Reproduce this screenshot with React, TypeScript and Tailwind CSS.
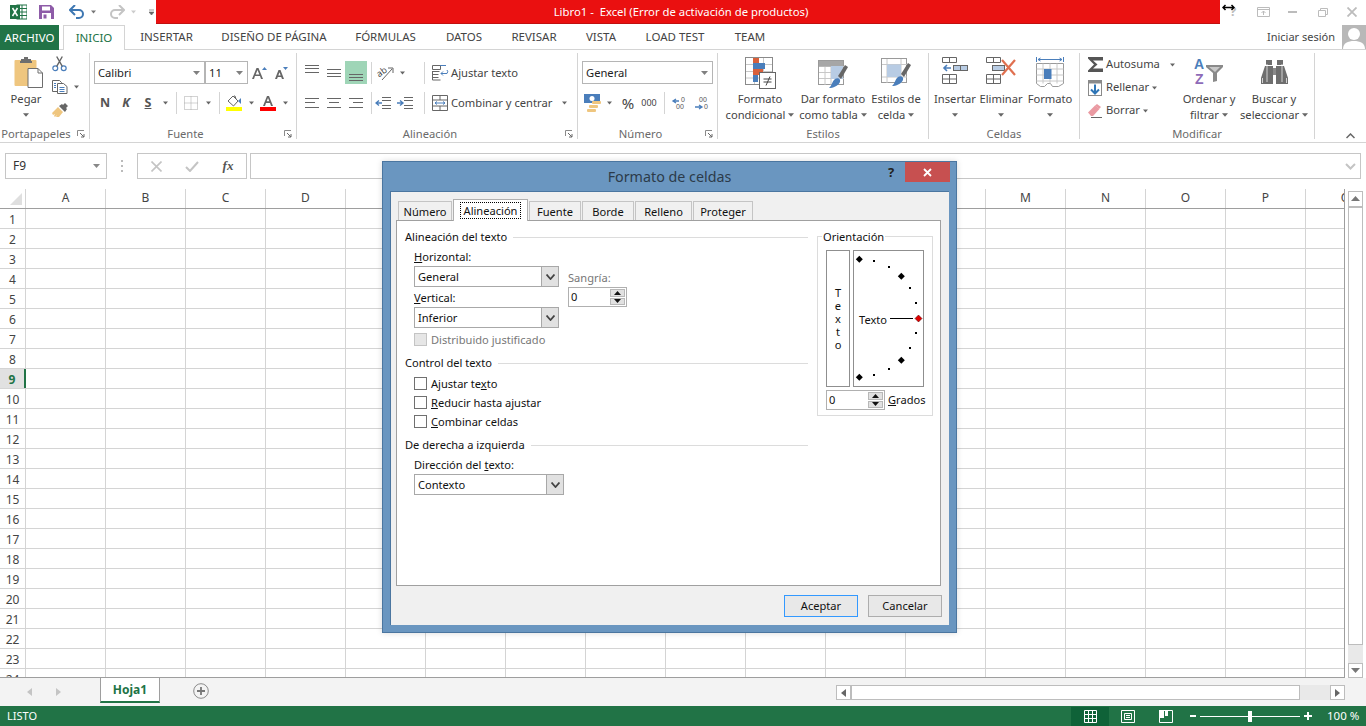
import React from "react";

const FONT = "font-['Noto_Sans','Open_Sans',sans-serif]";

const cols = ["A","B","C","D","E","F","G","H","I","J","K","L","M","N","O","P","Q"];
const rows = Array.from({length:24},(_,i)=>i+1);

function Caret({c="#666",w=7}:{c?:string;w?:number}){
  return <svg width={w} height={4} viewBox="0 0 7 4" className="shrink-0"><path d="M0 0h7L3.5 4z" fill={c}/></svg>;
}
function Sep(){return <div className="w-px h-[22px] bg-[#d4d4d4] shrink-0"/>;}
function Launcher(){
  return <svg width="8" height="8" viewBox="0 0 8 8" className="shrink-0"><path d="M.5 6V.5H7" fill="none" stroke="#8a8a8a"/><path d="M3 3l4 4M7 4v3H4" fill="none" stroke="#666"/></svg>;
}
function Cell({w,children,className=""}:{w:number;children?:React.ReactNode;className?:string}){
  return <div style={{width:w}} className={"shrink-0 flex items-center justify-center [&>svg]:shrink-0 "+className}>{children}</div>;
}
function Group({w,label,launcher,labelPr=0,children}:{w:number;label:string;launcher?:boolean;labelPr?:number;children:React.ReactNode}){
  return (
    <div style={{width:w}} className="shrink-0 h-[86px] mt-[3px] border-r border-[#d4d4d4] flex flex-col">
      <div className="h-[71px] flex">{children}</div>
      <div className="h-[15px] pt-[4px] flex relative">
        <div style={{paddingRight:labelPr}} className="flex-1 text-center text-[11.2px] text-[#6a6a6a] leading-[11px]">{label}</div>
        {launcher && <div className="absolute right-[4px] top-[6px]"><Launcher/></div>}
      </div>
    </div>
  );
}

/* icons */
function Paste(){return(
<svg width="30" height="32" viewBox="0 0 30 32" className="ml-[6px]">
  <rect x="0.5" y="3" width="22" height="26" rx="1" fill="#efc67f"/>
  <path d="M7 4V2h3V0h4v2h3v2h1v2H6V4z" fill="#6e6e6e"/>
  <path d="M14 11.5h10l4.5 4.5v14.5H14z" fill="#fff" stroke="#6e6e6e"/>
  <path d="M24 11.5v4.5h4.5" fill="none" stroke="#6e6e6e"/>
</svg>);}
function Scissors(){return(
<svg width="15" height="16" viewBox="0 0 16 16" fill="none">
  <circle cx="3.5" cy="12.5" r="2.6" stroke="#4a7ebb" strokeWidth="1.3"/>
  <circle cx="12.5" cy="12.5" r="2.6" stroke="#4a7ebb" strokeWidth="1.3"/>
  <path d="M5 10.5 11 0M11 10.5 5 0" stroke="#666" strokeWidth="1.5"/>
</svg>);}
function Copy(){return(
<svg width="16" height="14" viewBox="0 0 16 14" fill="#fff">
  <path d="M.5.5h7l2 2v9H.5z" stroke="#666"/>
  <path d="M5.5 3.5h6l3.5 3v7H5.5z" stroke="#666"/>
  <path d="M7.5 7.5h5M7.5 9.5h5M7.5 11.5h5M2 3.5h2M2 5.5h2M2 7.5h2" stroke="#4a7ebb"/>
</svg>);}
function Brush(){return(
<svg width="16" height="14" viewBox="0 0 16 14">
  <path d="M0 10l6-6 5 5-4 5H4l1-2-2 2-1-1 1-2-2 1z" fill="#efc67f"/>
  <path d="M7 3l3-2 1 1 2-2 3 3-2 2 1 1-2 3z" fill="#666"/>
</svg>);}
function Lines({ls}:{ls:[number,number,number][]}){return(
<svg width="15" height="20" viewBox="0 0 15 20">{ls.map(([y,a,b],i)=><rect key={i} x={a} y={y} width={b-a} height={1} fill="#666"/>)}</svg>);}
function ColorA({c}:{c:string}){return(
<svg width="16" height="16" viewBox="0 0 16 16">
  <path d="M3 11 7 1h2l4 10h-2L10 8H6l-1 3zM6.7 6.3h2.6L8 3z" fill="#666" fillRule="evenodd"/>
  <rect x="0" y="12" width="16" height="4" fill={c}/>
</svg>);}
function Fill(){return(
<svg width="16" height="16" viewBox="0 0 16 16">
  <path d="M2 6 7 1l5 5-4.5 5z" fill="#fff" stroke="#666"/>
  <path d="M8 1h1l1 3" fill="none" stroke="#666"/>
  <path d="M12 6l3 3V3z" fill="#4a7ebb"/>
  <rect x="0" y="12" width="16" height="4" fill="#ffff00"/>
</svg>);}
function BigA({up}:{up:boolean}){return(
<svg width="16" height="14" viewBox="0 0 16 14">
  <path d={up?"M0 13 4.5 2h2L11 13H9L8 10H3l-1 3zM3.7 8.5h3.6L5.5 4z":"M2 13 5.5 4h2L11 13H9L8.2 11H4.8L4 13zM5.3 9.5h2.4L6.5 6.2z"} fill="#666" fillRule="evenodd"/>
  <path d={up?"M10 4l2.5-3L15 4z":"M10 1h5l-2.5 3z"} fill="#4a7ebb"/>
</svg>);}
function Borders(){return(
<svg width="14" height="14" viewBox="0 0 14 14" fill="none" stroke="#a6a6a6" strokeDasharray="1 1">
  <path d="M.5.5h13v13H.5zM7 .5v13M.5 7h13"/>
</svg>);}
function Orient(){return(
<svg width="18" height="16" viewBox="0 0 18 16">
  <text x="1" y="10" fontSize="9" fill="#444" transform="rotate(-35 6 8)" fontFamily="Noto Sans">ab</text>
  <path d="M6 15 16 4M12 3h5v5" fill="none" stroke="#666"/>
</svg>);}
function Indent({right}:{right:boolean}){return(
<svg width="16" height="12" viewBox="0 0 16 12">
  <path d="M7 .5h9M7 3.5h9M7 8.5h9M7 11.5h9" stroke="#666" fill="none"/>
  {right?<path d="M0 6h5M3 3.5 6 6l-3 2.5" stroke="#4a7ebb" strokeWidth="1.4" fill="none"/>:<path d="M1 6h6M4 3.5 1 6l3 2.5" stroke="#4a7ebb" strokeWidth="1.4" fill="none"/>}
</svg>);}
function Wrap(){return(
<svg width="17" height="16" viewBox="0 0 17 16" fill="none">
  <path d="M.5.5h8v4h-8zM.5 6.5h7M.5 9.5h6M.5 12.5h6M.5 6v9h8" stroke="#666"/>
  <path d="M8 .5h6" stroke="#4a7ebb"/>
  <path d="M9 8.5h6q1.5-2 0-3.5M9 8.5l2-2M9 8.5l2 2" stroke="#4a7ebb"/>
</svg>);}
function Merge(){return(
<svg width="16" height="16" viewBox="0 0 16 16" fill="none">
  <path d="M.5.5h15v15H.5zM.5 5h15M.5 11h15M8 .5V5M8 11v4.5" stroke="#666"/>
  <path d="M3 8h10M3 8l2-1.5M3 8l2 1.5M13 8l-2-1.5M13 8l-2 1.5" stroke="#4a7ebb"/>
</svg>);}
function Currency(){return(
<svg width="18" height="18" viewBox="0 0 18 18">
  <rect x="0" y="0" width="16" height="9" fill="#4a7ebb"/>
  <circle cx="8" cy="4.5" r="2.5" fill="#fff"/>
  <rect x="8" y="7" width="9" height="3" rx="1" fill="#efc67f"/><rect x="5" y="11" width="9" height="3" rx="1" fill="#efc67f"/><rect x="3" y="15" width="9" height="3" rx="1" fill="#efc67f"/>
</svg>);}
function Dec({more}:{more:boolean}){return(
<svg width="18" height="14" viewBox="0 0 18 14">
  <path d={more?"M2 5h6M5 3l-3 2 3 2":"M1 11h7M5 9l3 2-3 2"} stroke="#4a7ebb" strokeWidth="1.3" fill="none"/>
  {more?<>
    <text x="10" y="6" fontSize="7" fill="#555" fontFamily="Liberation Sans">0</text>
    <text x="5" y="13" fontSize="7" fill="#555" fontFamily="Liberation Sans">00</text></>:<>
    <text x="5" y="6" fontSize="7" fill="#555" fontFamily="Liberation Sans">00</text>
    <text x="10" y="13" fontSize="7" fill="#555" fontFamily="Liberation Sans">0</text></>}
</svg>);}
function CondFormat(){return(
<svg width="31" height="32" viewBox="0 0 31 32">
  <rect x="0.5" y="0.5" width="27" height="27" fill="#fff" stroke="#8a8a8a"/>
  <path d="M9.5 1v26M18.5 1v26M1 7.5h26M1 14.5h26M1 21h26" stroke="#c8c8c8"/>
  <path d="M8 1h6v5H8z" fill="#d9603b"/><path d="M8 6h12v6H8z" fill="#4a7ebb"/>
  <path d="M8 12h10v6H8z" fill="#d9603b"/><path d="M8 18h5v7H8z" fill="#4a7ebb"/>
  <rect x="14.5" y="15.5" width="16" height="16" fill="#fff" stroke="#666"/>
  <path d="M18.5 22h8M18.5 25h8M25 19.5l-4 9" stroke="#444"/>
</svg>);}
function TableFmt(){return(
<svg width="31" height="32" viewBox="0 0 31 32">
  <rect x="0.5" y="3.5" width="25" height="24" fill="#fff" stroke="#9a9a9a"/>
  <path d="M7 4v24M13 4v24M19 4v24M1 9.5h25M1 15.5h25M1 21.5h25" stroke="#c8c8c8"/>
  <rect x="1" y="4" width="24" height="5.5" fill="#a6a6a6"/>
  <rect x="13" y="9" width="12" height="13" fill="#b8cce4"/>
  <path d="M20 19 27 8l3 2-7 12z" fill="#666"/>
  <path d="M17 22c3-2 6 0 5 3-2 4-7 6-11 6 3-2 3-7 6-9z" fill="#4a7ebb"/>
</svg>);}
function CellStyle(){return(
<svg width="31" height="32" viewBox="0 0 31 32">
  <rect x="0.5" y="1.5" width="25" height="24" fill="#fff" stroke="#9a9a9a"/>
  <path d="M6 2v24M1 7.5h25M20 2v24M1 20h25" stroke="#c8c8c8"/>
  <rect x="6" y="7.5" width="14" height="12.5" fill="#b8cce4"/>
  <path d="M20 17 27 6l3 2-7 12z" fill="#666"/>
  <path d="M17 20c3-2 6 0 5 3-2 4-7 6-11 6 3-2 3-7 6-9z" fill="#4a7ebb"/>
</svg>);}
function InsertI(){return(
<svg width="27" height="27" viewBox="0 0 27 27" fill="none">
  <path d="M.5.5h14v5H.5zM7.5.5v5M.5 17.5h14v9H.5zM.5 22h14M7.5 17.5v9" stroke="#666"/>
  <rect x="11.5" y="8.5" width="14" height="5" fill="#b8cce4" stroke="#666"/><path d="M18.5 8.5v5" stroke="#666"/>
  <path d="M9 11H2M5 8l-3 3 3 3" stroke="#4a7ebb" strokeWidth="1.6"/>
</svg>);}
function DeleteI(){return(
<svg width="30" height="27" viewBox="0 0 30 27" fill="none">
  <path d="M.5.5h14v5H.5zM7.5.5v5M.5 17.5h14v9H.5zM.5 22h14M7.5 17.5v9" stroke="#666"/>
  <rect x="6.5" y="8.5" width="12" height="5" fill="#b8cce4" stroke="#666"/>
  <path d="M16 3l13 15M29 3 16 18" stroke="#e07050" strokeWidth="2.2"/>
</svg>);}
function FormatI(){return(
<svg width="28" height="30" viewBox="0 0 28 30" fill="none">
  <path d="M.5 0v5M27.5 0v5M2 2.5h24M2 2.5l2.5-1.5M2 2.5 4.5 4M26 2.5 23.5 1M26 2.5 23.5 4" stroke="#4a7ebb"/>
  <path d="M.5 6.5h27v20l-5 3h-6l-2-3h-3l-3 3h-4l-4-3z" stroke="#9a9a9a"/>
  <path d="M7 6.5v20M14 6.5v20M21 6.5v20M.5 12h27M.5 18h27M.5 24h27" stroke="#c8c8c8"/>
  <rect x="8" y="12" width="7.5" height="10" fill="#4a7ebb"/>
</svg>);}
function Sigma(){return(
<svg width="16" height="15" viewBox="0 0 16 15"><path d="M0 0h15v3.500H5L9.500 7.500 5 11.500h10V15H0v-1.500L6 7.500 0 1.500z" fill="#555"/></svg>);}
function FillI(){return(
<svg width="14" height="16" viewBox="0 0 14 16" fill="none">
  <rect x=".5" y=".5" width="13" height="15" fill="#fff" stroke="#8a8a8a"/><rect x="1" y="1" width="12" height="2.5" fill="#8a8a8a"/>
  <path d="M7 4.5v9M3 9.5l4 4 4-4" stroke="#2e75b6" strokeWidth="2"/>
</svg>);}
function Eraser(){return(
<svg width="14" height="14" viewBox="0 0 14 14">
  <path d="M0 8.5 7 1.5l4.5 3.500-6.500 7H3z" fill="#ea9aa2"/><path d="M7 1.5l2-1.500 4 3-2 2z" fill="#ea9aa2"/><path d="M3 13.500h11" stroke="#666"/>
</svg>);}
function SortI(){return(
<svg width="31" height="28" viewBox="0 0 31 28">
  <text x="0" y="12" fontSize="14" fontWeight="700" fill="#4a7ebb" fontFamily="Liberation Sans">A</text>
  <text x="1" y="27" fontSize="14" fontWeight="700" fill="#8e6bb8" fontFamily="Liberation Sans">Z</text>
  <path d="M12 8h17v2l-6 6v8l-4 1v-9l-7-6z" fill="#8a8a8a"/><path d="M15 10h11l-5 5z" fill="#c8c8c8"/>
</svg>);}
function Binoc(){return(
<svg width="27" height="24" viewBox="0 0 27 24" className="mt-[3px]">
  <rect x="5" y="0" width="6" height="5" fill="#6e6e6e"/><rect x="16" y="0" width="6" height="5" fill="#6e6e6e"/>
  <path d="M4 6h8v18H0v-6z" fill="#6e6e6e"/><path d="M23 6h-8v18h12v-6z" fill="#6e6e6e"/>
  <rect x="12" y="8" width="3" height="7" fill="#8a8a8a"/>
  <path d="M1.500 23v-5M25.500 23v-5M6 4v18M21 4v18" stroke="#fff" strokeWidth=".7"/>
</svg>);}

function BigBtn({w,icon,l1,l2,caretInline}:{w:number;icon:React.ReactNode;l1:string;l2?:string;caretInline?:boolean}){
  return (
    <div style={{width:w}} className="shrink-0 flex flex-col items-center text-[#444] text-[11.2px] leading-[16px] whitespace-nowrap">
      <div className="h-[35px] mt-[4px] flex items-start justify-center">{icon}</div>
      <div className="h-[16px] mt-[-1px]">{l1}</div>
      {caretInline
        ? <div className="h-[16px] flex items-center gap-[3px]">{l2}<Caret w={6}/></div>
        : <div className="h-[16px] flex items-center"><Caret w={6}/></div>}
    </div>
  );
}

function Combo({w,text}:{w:number;text:string}){
  return (
    <div style={{width:w}} className="h-[23px] border border-[#b5b5b5] bg-white flex items-center pl-[3px] pr-[4px] justify-between text-[11.2px] text-[#222] shrink-0">
      <span className="pt-px">{text}</span><Caret c="#808080"/>
    </div>
  );
}

function DlgSelect({w,text}:{w:number;text:string}){
  return (
    <div style={{width:w}} className="h-[21px] border border-[#a8a8a8] bg-white flex items-center justify-between pl-[3px] text-[11.1px] text-[#111]">
      <span>{text}</span>
      <div className="w-[17px] h-full bg-[#e1e1e1] border-l border-[#a8a8a8] flex items-center justify-center">
        <svg width="9" height="6" viewBox="0 0 9 6"><path d="M.5.5 4.500 5 8.500.5" fill="none" stroke="#444" strokeWidth="1.800"/></svg>
      </div>
    </div>
  );
}
function Spin({w}:{w:number}){
  return (
    <div style={{width:w}} className="h-[20px] border border-[#b0b0b0] bg-white flex items-center justify-between pl-[2px] pr-px text-[11.1px] text-[#111]">
      <span>0</span>
      <div className="w-[15px] h-[16px] flex flex-col gap-px">
        <div className="flex-1 bg-[#e1e1e1] border border-[#b8b8b8] flex items-center justify-center"><svg width="7" height="4"><path d="M0 4 3.500 0 7 4z" fill="#111"/></svg></div>
        <div className="flex-1 bg-[#e1e1e1] border border-[#b8b8b8] flex items-center justify-center"><svg width="7" height="4"><path d="M0 0 3.500 4 7 0z" fill="#111"/></svg></div>
      </div>
    </div>
  );
}
function Section({label,mt=0}:{label:string;mt?:number}){
  return <div style={{marginTop:mt}} className="h-[14px] flex items-center gap-[6px] text-[11.1px] text-[#111] leading-none whitespace-nowrap">{label}<div className="flex-1 h-px bg-[#dcdcdc]"/></div>;
}
function Check({children,mt}:{children:React.ReactNode;mt:number}){
  return <div style={{marginTop:mt}} className="ml-[9px] h-[13px] flex items-center gap-[4px] text-[11.1px] text-[#111] leading-none">
    <div className="w-[13px] h-[13px] border border-[#707070] bg-white shrink-0"/><span>{children}</span></div>;
}
function DlgTab({w,active,children}:{w:number;active?:boolean;children:string}){
  return active
   ? <div style={{width:w}} className="h-[22px] mb-[-1px] z-10 relative bg-white border border-b-0 border-[#b0b0b0] flex items-center justify-center text-[11.1px] leading-[14px] text-[#111]">
       <span className="border border-dotted border-black px-[3px] leading-[15px]">{children}</span>
     </div>
   : <div style={{width:w}} className="h-[19px] pt-[2px] bg-[#f0f0f0] border border-b-0 border-[#c4c4c4] flex items-center justify-center text-[11.1px] leading-[14px] text-[#111]">{children}</div>;
}

const dots:[number,number,boolean][]=[[6.3,9.3,true],[21,11,false],[36,17,false],[48.3,26.3,true],[57,38,false],[63,53,false],[63,83,false],[57,98,false],[48.3,110.3,true],[36,119,false],[21,125,false],[6.3,127.3,true]];

function Dial(){
  return (
    <div className="w-[71px] h-[137px] border border-[#8f8f8f] ml-[3px] relative">
      <svg width="71" height="137" viewBox="0 0 71 137" className="absolute -left-px -top-px">
        {dots.map(([x,y,b],i)=> b
          ? <path key={i} d={`M${x} ${y-3.5}l3.5 3.5-3.5 3.5-3.5-3.5z`} fill="#000"/>
          : <rect key={i} x={x-1} y={y-1} width={2} height={2} fill="#000"/>)}
        <path d="M37 68.5h23" stroke="#000"/>
        <path d="M65.5 65l3.5 3.5-3.5 3.5-3.5-3.5z" fill="#e00000" stroke="#400" strokeWidth=".5"/>
      </svg>
      <span className="absolute left-[5px] top-[62px] text-[11.1px] leading-[14px] text-[#111]">Texto</span>
    </div>
  );
}

function Dialog(){
  return (
    <div className={"absolute left-[382px] top-[161px] w-[575px] h-[472px] bg-[#6a96c0] border border-[#4b76a0] shadow-[0_0_6px_rgba(0,0,0,0.15)] flex flex-col "+FONT}>
      <div className="h-[29px] shrink-0 flex relative">
        <div className="flex-1 text-center text-[14.3px] leading-[30px] text-[#2c3b4a]">Formato de celdas</div>
        <div className="absolute right-[50px] top-0 w-[30px] text-center text-[13px] font-bold text-[#222] leading-[20px]">?</div>
        <div className="absolute right-[6px] top-0 w-[45px] h-[20px] bg-[#c75050] flex items-center justify-center">
          <svg width="9" height="9" viewBox="0 0 9 9"><path d="M1 1l7 7M8 1 1 8" stroke="#fff" strokeWidth="1.800"/></svg>
        </div>
      </div>
      <div className="mx-[7px] h-[434px] bg-[#f0f0f0] border border-[#4b76a0] border-r-0 border-b-0 pl-[5px] pt-[7px] flex flex-col">
        <div className="flex items-end h-[21px] pl-[2px] gap-px">
          <DlgTab w={54}>Número</DlgTab>
          <DlgTab w={75} active>Alineación</DlgTab>
          <DlgTab w={52}>Fuente</DlgTab>
          <DlgTab w={52}>Borde</DlgTab>
          <DlgTab w={57}>Relleno</DlgTab>
          <DlgTab w={60}>Proteger</DlgTab>
        </div>
        <div className="w-[545px] h-[366px] bg-white border border-[#a0a0a0] flex pl-[8px]">
          <div className="w-[403px] pt-[9px] flex flex-col text-[11.1px] text-[#111] leading-[14px]">
            <Section label="Alineación del texto"/>
            <div className="ml-[9px] mt-[6px] h-[14px]"><span className="underline">H</span>orizontal:</div>
            <div className="ml-[9px] mt-[2px] flex">
              <DlgSelect w={145} text="General"/>
              <div className="ml-[9px] flex flex-col">
                <div className="h-[14px] mt-[5px] text-[#777]">Sangría:</div>
                <div className="mt-[2px]"><Spin w={59}/></div>
              </div>
            </div>
            <div className="ml-[9px] -mt-[16px] h-[14px]"><span className="underline">V</span>ertical:</div>
            <div className="ml-[9px] mt-[2px]"><DlgSelect w={145} text="Inferior"/></div>
            <div className="ml-[9px] mt-[5px] h-[13px] flex items-center gap-[4px] text-[#777]">
              <div className="w-[13px] h-[13px] border border-[#c4c4c4] bg-[#e6e6e6]"/>Distribuido justificado
            </div>
            <Section label="Control del texto" mt={10}/>
            <Check mt={7}>Ajustar te<span className="underline">x</span>to</Check>
            <Check mt={6}><span className="underline">R</span>educir hasta ajustar</Check>
            <Check mt={6}><span className="underline">C</span>ombinar celdas</Check>
            <Section label="De derecha a izquierda" mt={10}/>
            <div className="ml-[9px] mt-[6px] h-[14px]">Dirección del <span className="underline">t</span>exto:</div>
            <div className="ml-[9px] mt-[2px]"><DlgSelect w={150} text="Contexto"/></div>
          </div>
          <div className="ml-[9px] mt-[15px] w-[116px] h-[180px] border border-[#dcdcdc] relative pl-[8px] pt-[13px]">
            <span className="absolute left-[4px] -top-[7px] bg-white px-px text-[11.1px] leading-[14px] text-[#111]">Orientación</span>
            <div className="flex">
              <div className="w-[24px] h-[137px] border border-[#8f8f8f] flex flex-col items-center justify-center text-[11.1px] leading-[13px] text-[#111]">
                {"Texto".split("").map((c,i)=><span key={i}>{c}</span>)}
              </div>
              <Dial/>
            </div>
            <div className="mt-[3px] flex items-center">
              <Spin w={59}/>
              <span className="ml-[3px] text-[11.1px] text-[#111]"><span className="underline">G</span>rados</span>
            </div>
          </div>
        </div>
        <div className="flex justify-end gap-[10px] mt-[9px] w-[546px]">
          <div className="w-[74px] h-[22px] border border-[#3399ff] bg-[#e8e8e8] flex items-center justify-center text-[11.1px] text-[#111]">Aceptar</div>
          <div className="w-[74px] h-[22px] border border-[#adadad] bg-[#e8e8e8] flex items-center justify-center text-[11.1px] text-[#111]">Cancelar</div>
        </div>
      </div>
    </div>
  );
}

export default function App(){
  return (
    <div className={"relative w-[1366px] h-[726px] overflow-hidden bg-white flex flex-col "+FONT}>
      {/* title bar */}
      <div className="h-[25px] shrink-0 flex items-start">
        <div className="w-[156px] h-[24px] flex items-center shrink-0">
          <div className="w-[39px] pl-[10px] flex">
            <svg width="17" height="16" viewBox="0 0 17 16"><rect x="7" y="1" width="10" height="14" fill="#fff" stroke="#217346"/><path d="M7 4.5h10M7 8h10M7 11.5h10M12 1v14" stroke="#217346"/><rect x="0" y="1" width="10" height="14" fill="#217346"/><path d="M2.5 4l5 8M7.5 4l-5 8" stroke="#fff" strokeWidth="1.5"/></svg>
          </div>
          <div className="w-[30px] flex justify-start">
            <svg width="15" height="14" viewBox="0 0 15 14"><path d="M0 0h12l3 3v11H0z" fill="#8e5ca8"/><rect x="3" y="1.5" width="8" height="4" fill="#fff"/><rect x="3" y="8" width="9" height="6" fill="#fff"/><rect x="4.5" y="9.5" width="3" height="4" fill="#8e5ca8"/></svg>
          </div>
          <div className="w-[40px] flex items-center gap-[6px]">
            <svg width="16" height="14" viewBox="0 0 16 14" fill="none"><path d="M2 5h8a4 4 0 0 1 0 8H7" stroke="#3e77b2" strokeWidth="2"/><path d="M6 0 1 5l5 5" stroke="#3e77b2" strokeWidth="2"/></svg>
            <Caret c="#777" w={5}/>
          </div>
          <div className="w-[40px] flex items-center gap-[6px]">
            <svg width="16" height="14" viewBox="0 0 16 14" fill="none"><path d="M14 5H6a4 4 0 0 0 0 8h3" stroke="#c4c4c4" strokeWidth="2"/><path d="M10 0l5 5-5 5" stroke="#c4c4c4" strokeWidth="2"/></svg>
            <Caret c="#ccc" w={5}/>
          </div>
          <svg width="5" height="7" viewBox="0 0 6 7" className="shrink-0"><path d="M0 .5h6M0 3h6L3 6.5z" stroke="#666" strokeWidth=".8" fill="#666"/></svg>
        </div>
        <div className="w-[1064px] shrink-0 h-[24px] bg-[#ea1010] border-b border-[#c01010] flex items-center justify-center pr-[14px] text-white text-[11.3px] leading-none whitespace-pre">Libro1 -  Excel (Error de activación de productos)</div>
        <div className="flex-1 h-[24px] flex items-center relative">
          <svg width="13" height="7" viewBox="0 0 13 7" className="absolute left-[2px] top-[4px]"><path d="M1 3.5h11M3.5 1 1 3.5 3.5 6M9.5 1 12 3.5 9.5 6" stroke="#000" strokeWidth="1.5" fill="none"/></svg>
          <div className="w-[6px] shrink-0"/>
          <span className="w-[14px] shrink-0 text-[#bcbcbc] font-bold text-[13px] text-center">?</span>
          <div className="w-[17px] shrink-0"/>
          <svg width="13" height="10" viewBox="0 0 13 10" fill="none" className="shrink-0"><path d="M.5.5h12v9H.5zM.5 2.5h12" stroke="#bcbcbc"/><path d="M6.500 8V4M4.500 6l2-2 2 2" stroke="#bcbcbc"/></svg>
          <div className="w-[18px] shrink-0"/>
          <div className="w-[9px] h-[2px] shrink-0 bg-[#bcbcbc]"/>
          <div className="w-[21px] shrink-0"/>
          <svg width="10" height="9" viewBox="0 0 10 9" fill="none" className="shrink-0"><path d="M.5 2.5h7v6h-7zM2.5 2V.5h7v6H8" stroke="#bcbcbc"/></svg>
          <div className="w-[19px] shrink-0"/>
          <svg width="10" height="10" viewBox="0 0 10 10" className="shrink-0"><path d="M.5.5l9 9M9.5.5l-9 9" stroke="#bcbcbc" strokeWidth="1.8"/></svg>
        </div>
      </div>
      {/* tabs */}
      <div className="h-[25px] shrink-0 flex border-b border-[#d4d4d4] text-[11.5px] text-[#444] relative">
        <div className="w-[59px] h-[25px] bg-[#217346] text-white flex items-center justify-center">ARCHIVO</div>
        <div className="ml-[4px] w-[62px] h-[25px] bg-white border border-b-0 border-[#d4d4d4] text-[#217346] flex items-center justify-center">INICIO</div>
        <div className="w-[83px] flex items-center justify-center">INSERTAR</div>
        <div className="w-[132px] flex items-center justify-center">DISEÑO DE PÁGINA</div>
        <div className="w-[91px] flex items-center justify-center">FÓRMULAS</div>
        <div className="w-[66px] flex items-center justify-center">DATOS</div>
        <div className="w-[74px] flex items-center justify-center">REVISAR</div>
        <div className="w-[60px] flex items-center justify-center">VISTA</div>
        <div className="w-[88px] flex items-center justify-center">LOAD TEST</div>
        <div className="w-[62px] flex items-center justify-center">TEAM</div>
        <div className="flex-1 flex items-center justify-end">
          <span className="text-[11px] mr-[7px]">Iniciar sesión</span>
          <div className="w-[24px] h-[24px] bg-[#b8b8b8] overflow-hidden">
            <svg width="24" height="24" viewBox="0 0 24 24"><circle cx="12" cy="9" r="6" fill="#fff"/><path d="M1 24c0-6 5-8 11-8s11 2 11 8z" fill="#fff"/></svg>
          </div>
        </div>
      </div>
      {/* ribbon */}
      <div className="h-[93px] shrink-0 border-b border-[#d4d4d4] flex">
        <Group w={90} label="Portapapeles" launcher labelPr={17}>
          <div className="w-[52px] shrink-0 flex flex-col items-center text-[11.2px] text-[#444] leading-[16px]">
            <div className="h-[35px] mt-[4px]"><Paste/></div>
            <div className="h-[16px] -mt-px">Pegar</div>
            <div className="h-[16px] flex items-center"><Caret w={6}/></div>
          </div>
          <div className="flex flex-col">
            <div className="h-[22px] flex items-center"><Scissors/></div>
            <div className="h-[22px] mt-px flex items-center gap-[6px]"><Copy/><Caret w={5}/></div>
            <div className="h-[22px] mt-px flex items-center"><Brush/></div>
          </div>
        </Group>
        <Group w={207} label="Fuente" launcher labelPr={15}>
          <div className="pl-[4px] pt-[8px] flex flex-col">
            <div className="flex items-center">
              <Combo w={111} text="Calibri"/>
              <Combo w={43} text="11"/>
              <Cell w={24}><BigA up/></Cell>
              <Cell w={18}><BigA up={false}/></Cell>
            </div>
            <div className="flex items-center h-[22px] mt-[8px] text-[#555] text-[12.5px]">
              <Cell w={22}><b>N</b></Cell>
              <Cell w={20}><b><i>K</i></b></Cell>
              <Cell w={24}><b className="underline">S</b></Cell>
              <Cell w={10}><Caret w={5}/></Cell>
              <Cell w={6}/><Sep/>
              <Cell w={28}><Borders/></Cell>
              <Cell w={6}><Caret w={5}/></Cell>
              <Cell w={8}/><Sep/>
              <Cell w={28}><Fill/></Cell>
              <Cell w={6}><Caret w={5}/></Cell>
              <Cell w={28}><ColorA c="#ff0000"/></Cell>
              <Cell w={6}><Caret w={5}/></Cell>
            </div>
          </div>
        </Group>
        <Group w={281} label="Alineación" launcher labelPr={14}>
          <div className="pl-[4px] pt-[8px] flex flex-col">
            <div className="flex items-center h-[23px]">
              <Cell w={22}><Lines ls={[[2,0,14],[5,0,14],[9,0,14]]}/></Cell>
              <Cell w={22}><Lines ls={[[6,0,14],[10,0,14],[13,0,14]]}/></Cell>
              <Cell w={22} className="h-[23px] bg-[#9fd5b7]"><Lines ls={[[11,0,14],[14,0,14],[17,0,14]]}/></Cell>
              <Cell w={4}/><Sep/>
              <Cell w={26}><Orient/></Cell>
              <Cell w={8}><Caret w={5}/></Cell>
              <Cell w={18}/><Sep/>
              <Cell w={30}><Wrap/></Cell>
              <span className="text-[11.2px] text-[#444] -ml-[4px] pt-px whitespace-nowrap">Ajustar texto</span>
            </div>
            <div className="flex items-center h-[22px] mt-[8px]">
              <Cell w={22}><Lines ls={[[5,0,14],[9,0,10],[14,0,14]]}/></Cell>
              <Cell w={22}><Lines ls={[[5,0,14],[9,2,12],[14,0,14]]}/></Cell>
              <Cell w={22}><Lines ls={[[5,0,14],[9,4,14],[14,0,14]]}/></Cell>
              <Cell w={4}/><Sep/>
              <Cell w={22}><Indent right={false}/></Cell>
              <Cell w={22}><Indent right/></Cell>
              <Cell w={8}/><Sep/>
              <Cell w={30}><Merge/></Cell>
              <span className="text-[11.2px] text-[#444] -ml-[4px] pt-px w-[111px] whitespace-nowrap shrink-0">Combinar y centrar</span>
              <Caret w={5}/>
            </div>
          </div>
        </Group>
        <Group w={140} label="Número" launcher labelPr={14}>
          <div className="pl-[4px] pt-[8px] flex flex-col">
            <Combo w={131} text="General"/>
            <div className="flex items-center h-[22px] mt-[8px] text-[#444]">
              <Cell w={22}><Currency/></Cell>
              <Cell w={10}><Caret w={5}/></Cell>
              <Cell w={28}><span className="text-[15px] leading-none">%</span></Cell>
              <Cell w={14}><span className="text-[9px]">000</span></Cell>
              <Cell w={8}/><Sep/>
              <Cell w={30}><Dec more/></Cell>
              <Cell w={16}><Dec more={false}/></Cell>
            </div>
          </div>
        </Group>
        <Group w={211} label="Estilos">
          <BigBtn w={84} icon={<CondFormat/>} l1="Formato" l2="condicional" caretInline/>
          <BigBtn w={62} icon={<TableFmt/>} l1="Dar formato" l2="como tabla" caretInline/>
          <BigBtn w={64} icon={<CellStyle/>} l1="Estilos de" l2="celda" caretInline/>
        </Group>
        <Group w={151} label="Celdas">
          <BigBtn w={52} icon={<InsertI/>} l1="Insertar"/>
          <BigBtn w={40} icon={<DeleteI/>} l1="Eliminar"/>
          <BigBtn w={58} icon={<FormatI/>} l1="Formato"/>
        </Group>
        <Group w={235} label="Modificar">
          <div className="w-[97px] shrink-0 pl-[8px] flex flex-col text-[11.2px] text-[#444]">
            <div className="h-[23px] flex items-center"><Cell w={18} className="!justify-start"><Sigma/></Cell><span className="w-[64px]">Autosuma</span><Caret w={5}/></div>
            <div className="h-[23px] flex items-center"><Cell w={18} className="!justify-start"><FillI/></Cell><span className="mr-[3px]">Rellenar</span><Caret w={5}/></div>
            <div className="h-[23px] flex items-center"><Cell w={18} className="!justify-start"><Eraser/></Cell><span className="mr-[3px]">Borrar</span><Caret w={5}/></div>
          </div>
          <BigBtn w={64} icon={<SortI/>} l1="Ordenar y" l2="filtrar" caretInline/>
          <BigBtn w={66} icon={<Binoc/>} l1="Buscar y" l2="seleccionar" caretInline/>
        </Group>
        <div className="flex-1 flex items-end justify-end pr-[11px] pb-[3px]">
          <svg width="9" height="6" viewBox="0 0 9 6"><path d="M.5 5 4.500 1 8.500 5" stroke="#666" strokeWidth="1.500" fill="none"/></svg>
        </div>
      </div>
      {/* formula bar */}
      <div className="h-[46px] shrink-0 pt-[10px] flex">
        <div className="ml-[5px] w-[102px] h-[26px] border border-[#c6c6c6] flex items-center justify-between pl-[7px] pr-[6px] text-[12px] text-[#333]">F9<Caret c="#888"/></div>
        <div className="w-[30px] h-[26px] flex items-center justify-center">
          <svg width="3" height="13"><rect y="0" width="2" height="2" fill="#bbb"/><rect y="5" width="2" height="2" fill="#bbb"/><rect y="10" width="2" height="2" fill="#bbb"/></svg>
        </div>
        <div className="w-[110px] h-[26px] border border-[#c6c6c6] flex items-center">
          <Cell w={36}><svg width="11" height="11"><path d="M.5.5l10 10M10.500.5l-10 10" stroke="#c4c4c4" strokeWidth="1.600"/></svg></Cell>
          <Cell w={36}><svg width="14" height="11"><path d="M1 6l4 4 8-9" stroke="#c4c4c4" strokeWidth="2" fill="none"/></svg></Cell>
          <Cell w={36}><span className="font-['Liberation_Serif',serif] italic font-bold text-[13px] text-[#555]">fx</span></Cell>
        </div>
        <div className="ml-[3px] flex-1 mr-[5px] h-[26px] border border-[#c6c6c6] flex items-center justify-end pr-[4px]">
          <svg width="11" height="7" viewBox="0 0 11 7"><path d="M1 1l4.500 4.500L10 1" fill="none" stroke="#c4c4c4" strokeWidth="2"/></svg>
        </div>
      </div>
      {/* grid area */}
      <div className="flex-1 flex min-h-0">
        <div className="w-[1345px] shrink-0 flex flex-col overflow-hidden border-r border-[#9e9e9e]">
          <div className="h-[20px] shrink-0 flex border-b border-[#9e9e9e] mt-[-1px] box-content">
            <div className="w-[26px] shrink-0 border-r border-[#d4d4d4] flex items-end justify-end pr-[3px] pb-[3px]"><svg width="12" height="12"><path d="M12 0v12H0z" fill="#dfdfdf"/></svg></div>
            {cols.map(c=><div key={c} className="w-[80px] shrink-0 border-r border-[#d4d4d4] flex items-center justify-center text-[12px] text-[#444]">{c}</div>)}
          </div>
          <div className="flex-1 overflow-hidden border-b border-[#9e9e9e] relative">
            {rows.map(r=>(
              <div key={r} className="h-[20px] flex border-b border-[#d4d4d4]">
                <div className={r===9?"w-[26px] shrink-0 pt-[2px] bg-[#e1e1e1] border-r-2 border-[#217346] flex items-center justify-center text-[12px] font-bold text-[#217346]":"w-[26px] shrink-0 pt-[2px] border-r border-[#d4d4d4] flex items-center justify-center text-[12px] text-[#444]"}>{r}</div>
                {cols.map(c=><div key={c} className="w-[80px] shrink-0 border-r border-[#d4d4d4]"/>)}
              </div>
            ))}
          </div>
        </div>
        <div className="flex-1 pl-[3px] pt-[2px] flex flex-col">
          <div className="w-[15px] h-[16px] bg-white border border-[#bdbdbd] flex items-center justify-center"><svg width="9" height="5"><path d="M0 5 4.500 0 9 5z" fill="#777"/></svg></div>
          <div className="w-[15px] h-[439px] bg-white border border-[#bdbdbd]"/>
          <div className="w-[15px] h-[18px] bg-[#e9e9e9]"/>
          <div className="w-[15px] h-[15px] bg-white border border-[#bdbdbd] flex items-center justify-center"><svg width="9" height="5"><path d="M0 0 4.500 5 9 0z" fill="#777"/></svg></div>
        </div>
      </div>
      {/* sheet tabs */}
      <div className="h-[28px] shrink-0 bg-[#f3f3f3] flex">
        <div className="w-[100px] shrink-0 flex items-center pl-[27px] gap-[24px] pb-[1px]">
          <svg width="5" height="8"><path d="M5 0v8L0 4z" fill="#c4c4c4"/></svg>
          <svg width="5" height="8"><path d="M0 0v8l5-4z" fill="#c4c4c4"/></svg>
        </div>
        <div className="w-[60px] h-[26px] -mt-px pt-[2px] bg-white border-x border-[#9e9e9e] border-b-2 border-b-[#217346] flex items-center justify-center text-[12px] font-bold text-[#217346]">Hoja1</div>
        <div className="ml-[33px] h-[26px] flex items-center">
          <svg width="16" height="16" viewBox="0 0 16 16" fill="none"><circle cx="8" cy="8" r="7.300" stroke="#8a8a8a"/><path d="M8 4v8M4 8h8" stroke="#777" strokeWidth="1.800"/></svg>
        </div>
        <div className="flex-1"/>
        <div className="w-[530px] shrink-0 flex items-start pt-[7px]">
          <div className="w-[15px] h-[15px] bg-white border border-[#bdbdbd] flex items-center justify-center"><svg width="5" height="8"><path d="M5 0v8L0 4z" fill="#666"/></svg></div>
          <div className="w-[449px] h-[15px] bg-white border border-[#bdbdbd]"/>
          <div className="w-[30px] h-[15px] bg-[#e9e9e9]"/>
          <div className="w-[15px] h-[15px] bg-white border border-[#bdbdbd] flex items-center justify-center"><svg width="5" height="8"><path d="M0 0v8l5-4z" fill="#666"/></svg></div>
        </div>
      </div>
      {/* status bar */}
      <div className="h-[20px] shrink-0 bg-[#217346] flex items-center text-white text-[11px]">
        <span className="ml-[7px]">LISTO</span>
        <div className="flex-1"/>
        <div className="w-[295px] shrink-0 flex items-center">
          <div className="w-[38px] h-[19px] bg-[#0f6238] flex items-center justify-center">
            <svg width="13" height="13" fill="none" viewBox="0 0 13 13"><path d="M.5.5h12v12H.5zM4.500.5v12M8.500.5v12M.5 4.500h12M.5 8.500h12" stroke="#fff"/></svg>
          </div>
          <div className="w-[38px] flex justify-center">
            <svg width="14" height="13" fill="none" viewBox="0 0 14 13"><path d="M.5.5h13v12H.5zM3.500 3.500h7v6h-7zM5 5.500h4M5 7.500h4" stroke="#fff"/></svg>
          </div>
          <div className="w-[38px] flex justify-center">
            <svg width="14" height="13" viewBox="0 0 14 13"><path d="M.5.5h13v12H.5z" stroke="#fff" fill="none"/><rect x="0" y="0" width="5" height="8" fill="#fff"/><rect x="6" y="0" width="3" height="6" fill="#fff"/></svg>
          </div>
          <div className="w-[5px]"/>
          <div className="w-[6px] h-[2px] bg-white"/>
          <div className="w-[100px] h-px bg-white ml-[4px] relative"><div className="absolute left-[48px] -top-[5px] w-[4px] h-[11px] bg-white"/></div>
          <div className="ml-[4px] w-[8px] h-[8px] relative"><div className="absolute left-0 top-[3px] w-[8px] h-[2px] bg-white"/><div className="absolute left-[3px] top-0 w-[2px] h-[8px] bg-white"/></div>
          <span className="ml-[15px] whitespace-nowrap text-[11.5px]">100 %</span>
        </div>
      </div>
      <Dialog/>
    </div>
  );
}
